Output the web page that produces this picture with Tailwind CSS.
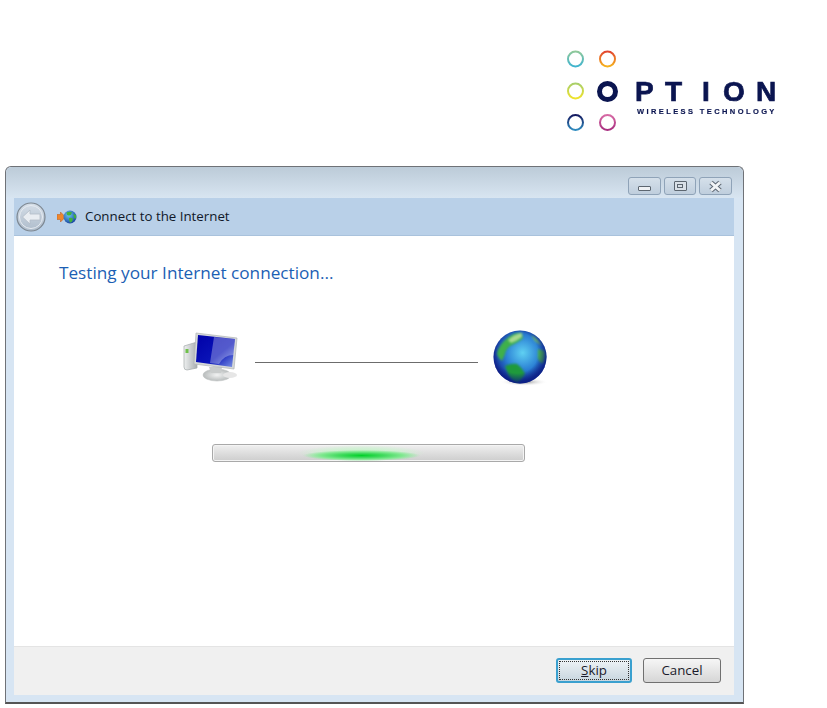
<!DOCTYPE html>
<html lang="en">
<head>
    <meta charset="UTF-8">
    <title>Connect to the Internet</title>
    <script src="https://cdn.jsdelivr.net/npm/@tailwindcss/browser@4"></script>
</head>
<body class="bg-white font-['Open_Sans',sans-serif]">
    <div class="w-[827px] h-[708px] overflow-hidden">
        <!-- Logo -->
        <div class="h-[166px] pl-[560px] pt-[44px]">
            <svg width="225" height="95" viewBox="0 0 225 95" class="block blur-[0.4px]">
                <defs>
                    <linearGradient id="ringTeal" x1="0" y1="0" x2="0" y2="1"><stop offset="0" stop-color="#8fc89a"/><stop offset="1" stop-color="#3fb4cf"/></linearGradient>
                    <linearGradient id="ringOrange" x1="0" y1="0" x2="0" y2="1"><stop offset="0" stop-color="#e2452f"/><stop offset="1" stop-color="#f6b21c"/></linearGradient>
                    <linearGradient id="ringYellow" x1="0" y1="0" x2="0" y2="1"><stop offset="0" stop-color="#a9cf6a"/><stop offset="1" stop-color="#f0e32a"/></linearGradient>
                    <linearGradient id="ringNavy" x1="0" y1="0" x2="0" y2="1"><stop offset="0" stop-color="#15195f"/><stop offset="1" stop-color="#2f8cc0"/></linearGradient>
                    <linearGradient id="ringPink" x1="0" y1="0" x2="0" y2="1"><stop offset="0" stop-color="#d76aa5"/><stop offset="1" stop-color="#a82e80"/></linearGradient>
                </defs>
                <circle cx="15.5" cy="15" r="7.5" fill="none" stroke="url(#ringTeal)" stroke-width="2"/>
                <circle cx="47.5" cy="15" r="7.5" fill="none" stroke="url(#ringOrange)" stroke-width="2"/>
                <circle cx="15.5" cy="47" r="7.5" fill="none" stroke="url(#ringYellow)" stroke-width="2"/>
                <circle cx="47.5" cy="47.5" r="8" fill="none" stroke="#0b1550" stroke-width="5"/>
                <circle cx="15.5" cy="78.5" r="7.5" fill="none" stroke="url(#ringNavy)" stroke-width="2"/>
                <circle cx="47.5" cy="78.5" r="7.5" fill="none" stroke="url(#ringPink)" stroke-width="2"/>
                <g fill="#0b1550" stroke="#0b1550" stroke-width="0.7" font-family="Liberation Sans" font-weight="700">
                    <text x="75" y="57" font-size="28">P</text>
                    <text x="105" y="57" font-size="28">T</text>
                    <text x="142" y="57" font-size="28">I</text>
                    <text x="163" y="57" font-size="28">O</text>
                    <text x="196" y="57" font-size="28">N</text>
                    <text x="77" y="70" font-size="7.5" letter-spacing="2.4" stroke-width="0.15">WIRELESS TECHNOLOGY</text>
                </g>
            </svg>
        </div>

        <!-- Window -->
        <div class="ml-[5px] w-[739px] h-[538px] rounded-t-[6px] border border-[#6f7277] border-b-2 border-b-[#555] bg-[#d7e5f3] flex flex-col">
            <div class="h-[31px] shrink-0 rounded-t-[6px] bg-gradient-to-b from-[#bccbd8] to-[#d8e5f1] flex justify-end items-start pt-[10px] pr-[11px] gap-[3px]">
                <div class="w-[33px] h-[18px] rounded-[3px] border border-[#8fa3b8] bg-gradient-to-b from-[#d5e0ea] to-[#bfcedd] flex items-end justify-center pb-[3px]">
                    <div class="w-[13px] h-[5px] rounded-[1px] border border-[#5c6670] bg-[#eef1f4]"></div>
                </div>
                <div class="w-[32px] h-[18px] rounded-[3px] border border-[#8fa3b8] bg-gradient-to-b from-[#d5e0ea] to-[#bfcedd] flex items-center justify-center">
                    <div class="w-[13px] h-[10px] rounded-[1px] border border-[#5c6670] bg-[#d9e0e7] flex items-center justify-center"><div class="w-[6px] h-[4px] border border-[#5c6670]"></div></div>
                </div>
                <div class="w-[33px] h-[18px] rounded-[3px] border border-[#8fa3b8] bg-gradient-to-b from-[#d5e0ea] to-[#bfcedd] flex items-center justify-center">
                    <svg width="15" height="13" viewBox="0 0 15 13"><path d="M3 2.5 L12 10.5 M12 2.5 L3 10.5" stroke="#5f6975" stroke-width="5"/><path d="M3 2.5 L12 10.5 M12 2.5 L3 10.5" stroke="#f2f4f6" stroke-width="3"/></svg>
                </div>
            </div>

            <div class="ml-[8px] mr-[9px] flex-1 flex flex-col min-h-0">
                <!-- Nav bar -->
                <div class="h-[38px] shrink-0 bg-[#b9d0e8] border-b border-[#a9c2dc] flex items-center pl-[2px]">
                    <svg width="30" height="30" viewBox="0 0 30 30" class="block">
                        <defs><linearGradient id="backFill" x1="0" y1="0" x2="0" y2="1"><stop offset="0" stop-color="#d5dee8"/><stop offset="1" stop-color="#aebccb"/></linearGradient></defs>
                        <circle cx="15" cy="15" r="14" fill="url(#backFill)" stroke="#7d8791" stroke-width="1.2"/>
                        <circle cx="15" cy="15" r="11.5" fill="none" stroke="#e6ebf1" stroke-width="1"/>
                        <path d="M6.5 15 L14 8 V12 H24 V18 H14 V22 Z" fill="#e9edf2" stroke="#b3bdc8" stroke-width="0.8"/>
                    </svg>
                    <svg width="20" height="16" viewBox="0 0 20 16" class="block ml-[11px]">
                        <defs><radialGradient id="smallGlobe" cx="0.4" cy="0.35" r="0.7"><stop offset="0" stop-color="#6cc8f0"/><stop offset="1" stop-color="#143f9c"/></radialGradient></defs>
                        <path d="M0 5.5 H3.5 V3 L8.5 8 L3.5 13 V10.5 H0 Z" fill="#f0862a" stroke="#b9581c" stroke-width="0.5"/>
                        <circle cx="13" cy="8" r="6.5" fill="url(#smallGlobe)"/>
                        <path d="M9.5 3.5 Q13 2 15 3.5 Q14 7 11.5 6.5 Q9.5 6 9.5 3.5 Z M12 9 Q15.5 8 16 10.5 Q14.5 14 13 13.5 Q11.5 11.5 12 9 Z M16.5 5 L19 6 Q19.5 9 18 10 Q16.5 8 16.5 5 Z" fill="#43b23a"/>
                    </svg>
                    <span class="ml-[8px] text-[13.3px] leading-none text-[#101828]">Connect to the Internet</span>
                </div>

                <!-- Content -->
                <div class="flex-1 bg-white flex flex-col pt-[26px] min-h-0">
                    <h1 class="pl-[45px] text-[17.2px] leading-[22px] text-[#1c5fb4]">Testing your Internet connection...</h1>
                    <div class="mt-[44px] ml-[167px] flex items-center h-[60px]">
                        <svg width="58" height="54" viewBox="0 0 58 54" class="block blur-[0.3px]">
                            <defs>
                                <linearGradient id="screenBlue" x1="0" y1="0" x2="1" y2="1"><stop offset="0" stop-color="#0000a8"/><stop offset="0.6" stop-color="#0a14b8"/><stop offset="1" stop-color="#7f98e6"/></linearGradient>
                                <linearGradient id="towerGrey" x1="0" y1="0" x2="1" y2="0"><stop offset="0" stop-color="#eef0f0"/><stop offset="1" stop-color="#a8adb0"/></linearGradient>
                                <radialGradient id="baseGrey"><stop offset="0" stop-color="#f2f3f3"/><stop offset="1" stop-color="#b8bcbc"/></radialGradient>
                            </defs>
                            <path d="M3 15 L16 11 V37 L6 39 Q3 39 3 36 Z" fill="url(#towerGrey)" stroke="#a4a9ab" stroke-width="0.7"/>
                            <rect x="4.5" y="18" width="3" height="4" fill="#6fc04a"/>
                            <ellipse cx="36" cy="44" rx="14" ry="6" fill="url(#baseGrey)" stroke="#c2c6c6" stroke-width="0.6"/>
                            <path d="M28 36 H41 L40 42 H30 Z" fill="#c9cccc"/>
                            <ellipse cx="49" cy="44" rx="7" ry="3" fill="#e6e6e6"/>
                            <path d="M15 2 L56 7 L53 38 L13 33 Z" fill="#d5d8d8" stroke="#b0b4b6" stroke-width="0.7"/>
                            <path d="M17 4 L54 8 L51 36 L15 31 Z" fill="url(#screenBlue)"/>
                            <path d="M33 6 L54 8 L52.5 24 Q43 24 38 33 L29 32 Z" fill="#fff" opacity="0.3"/>
                        </svg>
                        <div class="ml-[16px] mt-[9px] w-[223px] h-px bg-[#6c6c6c]"></div>
                        <svg width="58" height="58" viewBox="0 0 58 58" class="block ml-[14px]">
                            <defs>
                                <radialGradient id="globeSea" cx="0.55" cy="0.42" r="0.6"><stop offset="0" stop-color="#5fd0f2"/><stop offset="0.55" stop-color="#2a7fd4"/><stop offset="1" stop-color="#11208c"/></radialGradient>
                                <radialGradient id="globeRim" cx="0.45" cy="0.42" r="0.55"><stop offset="0.7" stop-color="#0a1a80" stop-opacity="0"/><stop offset="1" stop-color="#0a1a80" stop-opacity="0.75"/></radialGradient>
                                <radialGradient id="globeShade"><stop offset="0" stop-color="#8a8a8a"/><stop offset="1" stop-color="#ffffff" stop-opacity="0"/></radialGradient>
                                <clipPath id="globeClip"><circle cx="28" cy="28" r="26.5"/></clipPath>
                            </defs>
                            <ellipse cx="32" cy="53" rx="24" ry="4" fill="url(#globeShade)"/>
                            <circle cx="28" cy="28" r="26.5" fill="url(#globeSea)"/>
                            <g clip-path="url(#globeClip)">
                                <g class="blur-[1px]">
                                    <path d="M5 25 Q6 16 18 7 Q24 3 30 4 L31 9 Q27 13 18 17 Q14 20 13 25 L10 32 Q6 29 5 25 Z" fill="#3fb04a"/>
                                    <path d="M16 11 Q22 5 30 4 L30 8 Q25 12 19 14 Z" fill="#a7d98f"/>
                                    <path d="M13 37 Q20 34 25 35 Q31 40 33 45 Q29 52 25 54 Q18 50 16 45 Z" fill="#1f9a3c"/>
                                    <path d="M46 20 L53 22 Q54 30 51 35 Q47 33 46 29 Z" fill="#4cb84a"/>
                                    <path d="M39 6 Q46 9 50 17 L43 12 Z" fill="#7cc96a"/>
                                </g>
                            </g>
                            <circle cx="28" cy="28" r="26.5" fill="url(#globeRim)"/>
                        </svg>
                    </div>
                    <!-- Progress bar -->
                    <div class="relative mt-[56px] ml-[198px] w-[313px] h-[18px] rounded-[3px] border border-[#a9a9a9] bg-gradient-to-b from-[#f0f0f0] via-[#dedede] to-[#cdcdcd] shadow-[inset_0_0_0_1px_#f4f4f4] overflow-hidden">
                        <div class="absolute left-[85px] top-0 w-[127px] h-[16px] bg-[radial-gradient(ellipse_closest-side,#b8f4bccc_0%,#c8f4ccaa_60%,transparent_100%)]"></div>
                        <div class="absolute left-[90px] top-[5px] w-[117px] h-[11px] bg-[radial-gradient(ellipse_closest-side,#00d028_0%,#30d850dd_40%,#80e890_70%,transparent_100%)]"></div>
                    </div>
                </div>

                <!-- Footer -->
                <div class="h-[49px] shrink-0 bg-[#f0f0f0] border-t border-[#e4e4e4] flex justify-end items-center gap-[11px] pr-[13px] pb-[1px]">
                    <button class="w-[76px] h-[25px] rounded-[3px] border-2 border-[#3aa0cf] bg-gradient-to-b from-[#eef3f6] to-[#c8d6df] text-[13.3px] leading-none text-[#1a1a2a] outline-1 outline-dotted outline-[#333] outline-offset-[-4px]"><span class="underline">S</span>kip</button>
                    <button class="w-[78px] h-[25px] rounded-[3px] border border-[#707070] bg-gradient-to-b from-[#f6f6f6] to-[#d6d6d6] text-[13.3px] leading-none text-[#1a1a2a]">Cancel</button>
                </div>
            </div>
            <div class="h-[7px] shrink-0"></div>
        </div>
    </div>
</body>
</html>
